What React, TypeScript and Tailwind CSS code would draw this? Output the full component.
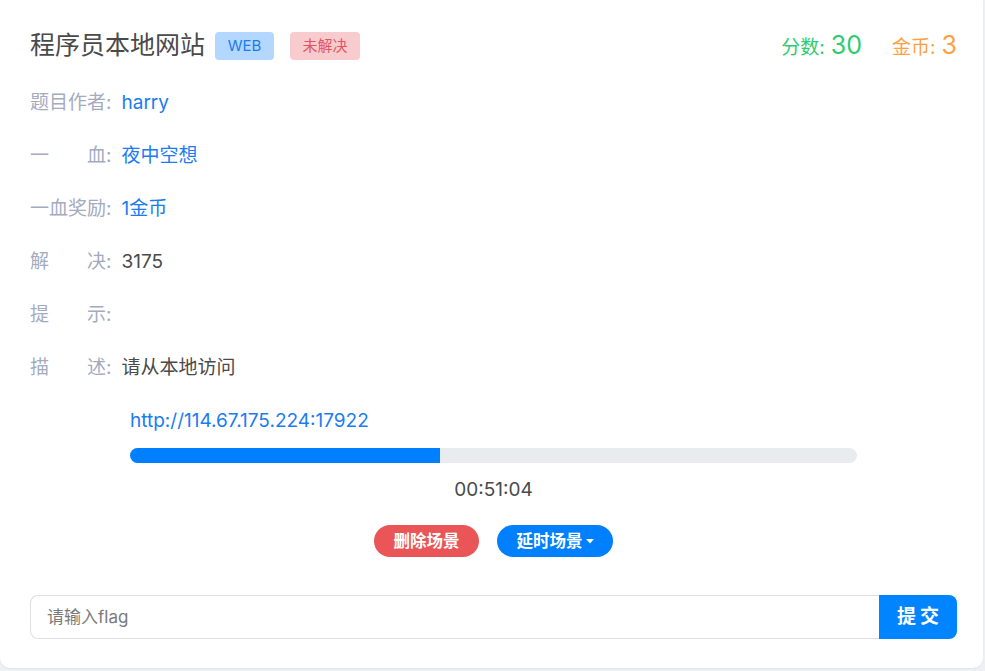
import React from "react";

const font = { fontFamily: 'Inter, "Noto Sans CJK SC", sans-serif' };

function Label({ chars }: { chars: string[] }) {
  return (
    <div className="flex items-center text-[19px] text-[#a4abbf]">
      <div className="flex w-[76px] justify-between">
        {chars.map((c, i) => (
          <span key={i}>{c}</span>
        ))}
      </div>
      <span>:</span>
    </div>
  );
}

function Row({ chars, children }: { chars: string[]; children?: React.ReactNode }) {
  return (
    <div className="flex h-[53px] items-center">
      <Label chars={chars} />
      <div className="ml-[10px] text-[19px]">{children}</div>
    </div>
  );
}

export default function App() {
  return (
    <div className="h-[671px] w-full bg-[#eef0f3]" style={font}>
      <div className="h-[668px] w-[983px] rounded-b-[10px] bg-white pl-[30px] pr-[26px] pt-[26px] shadow-[0_1px_2px_rgba(0,0,0,0.06)]">
        <div className="flex h-[40px] items-center justify-between">
          <div className="flex items-center">
            <span className="text-[25px] text-[#4a4a4a]">程序员本地网站</span>
            <span className="ml-[10px] flex h-[28px] w-[59px] items-center justify-center rounded-[4px] bg-[#b3d7ff] text-[15px] text-[#1a7cf0]">
              WEB
            </span>
            <span className="ml-[16px] flex h-[28px] w-[70px] items-center justify-center rounded-[4px] bg-[#f8cbcf] text-[15px] text-[#e5545f]">
              未解决
            </span>
          </div>
          <div className="flex items-baseline">
            <span className="text-[19px] text-[#2ecc71]">分数:</span>
            <span className="ml-[6px] text-[25px] text-[#2ecc71]">30</span>
            <span className="ml-[30px] text-[19px] text-[#ff9f43]">金币:</span>
            <span className="ml-[6px] text-[25px] text-[#ff9f43]">3</span>
          </div>
        </div>

        <div className="mt-[11px]">
          <Row chars={["题", "目", "作", "者"]}>
            <span className="text-[#1a7cf0]">harry</span>
          </Row>
          <Row chars={["一", "血"]}>
            <span className="text-[#1a7cf0]">夜中空想</span>
          </Row>
          <Row chars={["一", "血", "奖", "励"]}>
            <span className="text-[#1a7cf0]">1金币</span>
          </Row>
          <Row chars={["解", "决"]}>
            <span className="text-[#4a4a4a]">3175</span>
          </Row>
          <Row chars={["提", "示"]} />
          <Row chars={["描", "述"]}>
            <span className="text-[#4a4a4a]">请从本地访问</span>
          </Row>
        </div>

        <div className="ml-[100px] w-[727px]">
          <div className="mt-[12px] h-[28px] text-[19px] leading-[28px] text-[#1a7cf0]">
            http://114.67.175.224:17922
          </div>
          <div className="mt-[13px] h-[15px] w-full overflow-hidden rounded-full bg-[#e9ecef]">
            <div className="h-full bg-[#0080ff]" style={{ width: "42.6%" }} />
          </div>
          <div className="mt-[13px] h-[28px] text-center text-[19px] leading-[28px] text-[#4a4a4a]">
            00:51:04
          </div>
          <div className="mt-[21px] flex justify-center gap-[18px]">
            <button className="h-[32px] w-[105px] rounded-full bg-[#ea5558] text-[16.5px] font-bold text-white">
              删除场景
            </button>
            <button className="flex h-[32px] w-[116px] items-center justify-center rounded-full bg-[#0080ff] text-[16.5px] font-bold text-white">
              延时场景
              <svg width="8" height="5" viewBox="0 0 8 5" className="ml-[3px]">
                <path d="M0 0 L8 0 L4 4.5 Z" fill="white" />
              </svg>
            </button>
          </div>
        </div>

        <div className="mt-[38px] flex h-[44px]">
          <input
            className="h-full flex-1 rounded-l-[8px] border border-r-0 border-[#dddfe3] px-[16px] text-[17px] text-[#4a4a4a] outline-none placeholder:text-[#7a7a7a]"
            placeholder="请输入flag"
            style={font}
          />
          <button className="h-full w-[78px] rounded-r-[8px] bg-[#0084ff] pl-[4px] text-[19px] font-bold tracking-[4px] text-white">
            提交
          </button>
        </div>
      </div>
    </div>
  );
}
